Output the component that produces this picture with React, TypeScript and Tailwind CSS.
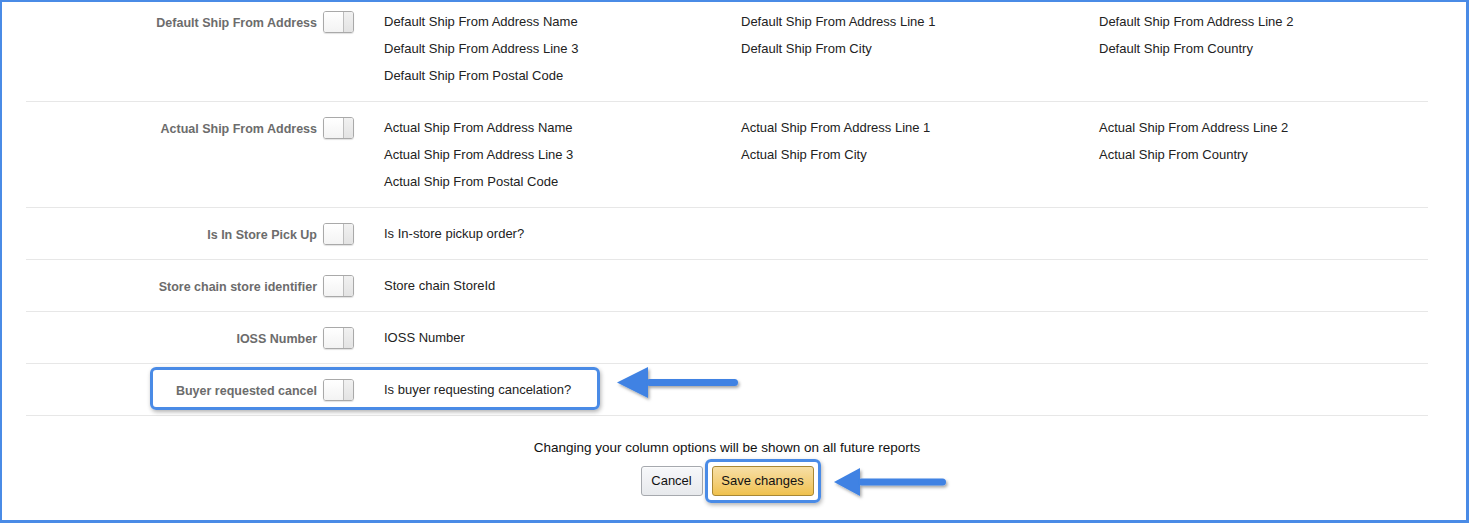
import React from "react";

type Row = { label: string; items: string[] };

const rows: Row[] = [
  {
    label: "Default Ship From Address",
    items: [
      "Default Ship From Address Name",
      "Default Ship From Address Line 1",
      "Default Ship From Address Line 2",
      "Default Ship From Address Line 3",
      "Default Ship From City",
      "Default Ship From Country",
      "Default Ship From Postal Code",
    ],
  },
  {
    label: "Actual Ship From Address",
    items: [
      "Actual Ship From Address Name",
      "Actual Ship From Address Line 1",
      "Actual Ship From Address Line 2",
      "Actual Ship From Address Line 3",
      "Actual Ship From City",
      "Actual Ship From Country",
      "Actual Ship From Postal Code",
    ],
  },
  { label: "Is In Store Pick Up", items: ["Is In-store pickup order?"] },
  { label: "Store chain store identifier", items: ["Store chain StoreId"] },
  { label: "IOSS Number", items: ["IOSS Number"] },
  { label: "Buyer requested cancel", items: ["Is buyer requesting cancelation?"] },
];

function Toggle() {
  return (
    <div className="flex h-[22px] w-[31px] overflow-hidden rounded-[3px] border border-[#a9a9a9] shadow-[0_1px_1px_rgba(0,0,0,0.12)]">
      <div className="flex-1 bg-gradient-to-b from-[#ffffff] to-[#f3f3f3]" />
      <div className="w-[10px] border-l border-[#bdbdbd] bg-gradient-to-b from-[#f1f1f1] to-[#e3e3e3]" />
    </div>
  );
}

function Arrow({ width, headLen, headH, shaft }: { width: number; headLen: number; headH: number; shaft: number }) {
  const h = headH + 8;
  const cy = headH / 2 + 1;
  return (
    <svg width={width + 6} height={h} viewBox={`0 0 ${width + 6} ${h}`} className="overflow-visible">
      <defs>
        <filter id={`sh${width}`} x="-10%" y="-30%" width="130%" height="180%">
          <feDropShadow dx="1.5" dy="2" stdDeviation="1.5" floodColor="#000" floodOpacity="0.35" />
        </filter>
      </defs>
      <g filter={`url(#sh${width})`} fill="#3f82e3">
        <polygon points={`0,${cy} ${headLen},${cy - headH / 2} ${headLen},${cy + headH / 2}`} />
        <rect x={headLen - 2} y={cy - shaft / 2} width={width - headLen + 2} height={shaft} rx={shaft / 2} />
      </g>
    </svg>
  );
}

export default function App() {
  return (
    <div
      className="relative h-[523px] w-[1469px] overflow-hidden border-b-[3px] border-l-2 border-r-[3px] border-t-2 border-[#4a8be6] bg-white text-[13px] text-[#111]"
      style={{ fontFamily: '"Liberation Sans", Arial, sans-serif' }}
    >
      <div className="ml-[24px] w-[1402px]">
        {rows.map((row, i) => (
          <div
            key={row.label}
            className={`relative flex items-start border-b border-[#e7e7e7] pb-3 ${i === 0 ? "pt-[6px]" : "pt-3"}`}
          >
            <div className="h-[27px] w-[291px] pt-[3px] text-right text-[12.5px] font-bold leading-[24px] text-[#6c6c6c]">
              {row.label}
            </div>
            <div className="ml-[6px] flex h-[27px] items-center pt-[1px]">
              <Toggle />
            </div>
            <div className="ml-[30px] grid flex-1 grid-cols-[357px_358px_1fr] leading-[27px] text-[#222]">
              {row.items.map((it) => (
                <div key={it}>{it}</div>
              ))}
            </div>
            {i === rows.length - 1 && (
              <>
                <div className="pointer-events-none absolute left-[124px] top-[3px] h-[43px] w-[450px] rounded-[6px] border-[3px] border-[#4a8be6] shadow-[1px_2px_4px_rgba(0,0,0,0.3)]" />
                <div className="pointer-events-none absolute left-[591px] top-[2px]">
                  <Arrow width={121} headLen={31} headH={31} shaft={7} />
                </div>
              </>
            )}
          </div>
        ))}
        <div className="pt-[23px] text-center text-[13.5px] leading-[18px] text-[#111]">
          Changing your column options will be shown on all future reports
        </div>
        <div className="mt-[9px] flex justify-center gap-[9px]">
          <button className="h-[30px] w-[62px] rounded-[3px] border border-[#a6a9ae] bg-gradient-to-b from-[#f7f8fa] to-[#e7e9ec] text-[13px] text-[#111] shadow-[0_1px_0_rgba(255,255,255,0.6)_inset]">
            Cancel
          </button>
          <div className="relative">
            <button className="h-[30px] w-[102px] rounded-[3px] border border-[#a88734] bg-gradient-to-b from-[#f7dfa5] to-[#f0c14b] text-[13px] text-[#111]">
              Save changes
            </button>
            <div className="pointer-events-none absolute -inset-[7px] rounded-[6px] border-[3px] border-[#4a8be6] shadow-[1px_2px_4px_rgba(0,0,0,0.3)]" />
            <div className="pointer-events-none absolute left-[122px] top-[1px]">
              <Arrow width={112} headLen={26} headH={28} shaft={7} />
            </div>
          </div>
        </div>
      </div>
    </div>
  );
}
